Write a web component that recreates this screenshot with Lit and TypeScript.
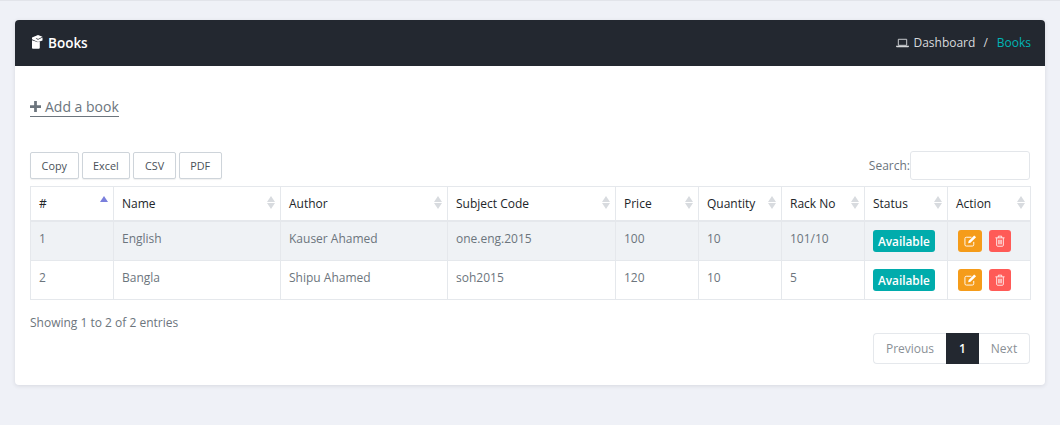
import { LitElement, css, html } from "lit";
import { customElement } from "lit/decorators.js";

const columns = ["#", "Name", "Author", "Subject Code", "Price", "Quantity", "Rack No", "Status", "Action"];

const books = [
  { id: 1, name: "English", author: "Kauser Ahamed", code: "one.eng.2015", price: 100, quantity: 10, rack: "101/10" },
  { id: 2, name: "Bangla", author: "Shipu Ahamed", code: "soh2015", price: 120, quantity: 10, rack: "5" },
];

const bookIcon = html`<svg class="book-icon" viewBox="0 0 13 15" width="13" height="15">
  <path fill="#fff" d="M2 6.200 8 8.200l1.800-.8V13.500c0 .8-.5 1.300-1.200 1.300H3.200C2.400 14.800 2 14.300 2 13.500z"/>
  <path fill="#fff" d="M2 3.600 8 1l4.500 1.800-4.400 2.200-1.500-.8-1 .4 2.400 1.200L12.500 3.500v3L8 8 2 5.200z"/>
</svg>`;

const laptopIcon = html`<svg viewBox="0 0 14 10" width="13" height="10">
  <path fill="none" stroke="#d3d5d8" stroke-width="1" d="M2.500 1h9v6.500h-9z"/>
  <path fill="#d3d5d8" d="M0 8h14v.8l-.8.7H.8L0 8.800z"/>
</svg>`;

const plusIcon = html`<svg viewBox="0 0 12 12" width="11" height="11">
  <path fill="#6c757d" d="M4.500 0h3v4.500H12v3H7.500V12h-3V7.500H0v-3h4.500z"/>
</svg>`;

const editIcon = html`<svg viewBox="0 0 14 14" width="13" height="13">
  <path fill="none" stroke="#fff" stroke-width="1" d="M10.500 8.500v3a1.500 1.500 0 0 1-1.500 1.500H2.500A1.500 1.500 0 0 1 1 11.500V5a1.500 1.500 0 0 1 1.500-1.500H8"/>
  <path fill="#fff" d="M5 7.500 11 1.500l2 2-6 6-2.500.5z"/>
</svg>`;

const trashIcon = html`<svg viewBox="0 0 12 14" width="10" height="12">
  <path fill="none" stroke="#fff" stroke-width="1" d="M2 3.500V12c0 .8.500 1.300 1 1.300h6c.5 0 1-.5 1-1.300V3.500M.5 3.200h11M4 3V1.200h4V3M4.500 5.500v5.500M6 5.500v5.500M7.500 5.500v5.500"/>
</svg>`;

@customElement("app-root")
export class AppRoot extends LitElement {
  static styles = css`
    :host {
      display: block;
      height: 425px;
      overflow: hidden;
      background: #eff1f7;
      font-family: "Open Sans", "Noto Sans", sans-serif;
      font-size: 12px;
      color: #6c757d;
      box-sizing: border-box;
      padding: 20px 15px 0;
      position: relative;
    }
    :host::before {
      content: "";
      position: absolute;
      left: 0;
      right: 0;
      top: 0;
      height: 1px;
      background: #e2e4ea;
    }
    .card {
      background: #fff;
      border-radius: 4px;
      height: 365px;
      box-shadow: 0 1px 4px rgba(40, 45, 60, 0.12);
      overflow: hidden;
    }
    .card-head {
      height: 46px;
      background: #232830;
      display: flex;
      align-items: center;
      justify-content: space-between;
      padding: 0 14px 0 15px;
    }
    .title {
      display: flex;
      align-items: center;
      gap: 5px;
      color: #fff;
      font-size: 13.500px;
      font-weight: 600;
      margin-top: -1px;
    }
    .book-icon {
      margin-top: -2px;
    }
    .crumbs {
      display: flex;
      align-items: center;
      color: #d8dadd;
      font-size: 12px;
      margin-top: -1px;
    }
    .crumbs svg {
      margin-right: 4px;
    }
    .crumbs .sep {
      margin: 0 9px 0 8px;
    }
    .crumbs .active {
      color: #00b5b5;
    }
    .card-body {
      padding: 0 15px;
    }
    .add-row {
      padding-top: 31px;
      height: 85px;
      box-sizing: border-box;
    }
    .add {
      display: inline-flex;
      align-items: center;
      gap: 4px;
      font-size: 14px;
      line-height: 19px;
      color: #6c757d;
      border-bottom: 1px solid #6c757d;
    }
    .tools {
      display: flex;
      justify-content: space-between;
      align-items: center;
      height: 28px;
      margin-bottom: 7px;
    }
    .buttons {
      display: flex;
      gap: 3px;
    }
    .buttons button {
      font: inherit;
      font-size: 10.800px;
      color: #495057;
      background: #fff;
      border: 1px solid #ced4da;
      border-radius: 2px;
      height: 27px;
      padding: 0 10.600px;
      box-shadow: 0 1px 1px rgba(0, 0, 0, 0.06);
    }
    .search {
      display: flex;
      align-items: center;
      font-size: 12px;
    }
    .search input {
      box-sizing: border-box;
      width: 120px;
      height: 29px;
      border: 1px solid #e3e6ea;
      border-radius: 3px;
      background: #fff;
      padding: 0;
    }
    table {
      width: 1000px;
      table-layout: fixed;
      border-collapse: collapse;
      font-size: 12px;
    }
    th,
    td {
      border: 1px solid #e5e8ec;
      padding: 0 8px;
      text-align: left;
      font-weight: 400;
      box-sizing: border-box;
    }
    th {
      height: 34px;
      color: #212529;
      border-bottom-width: 2px;
      position: relative;
    }
    td {
      height: 39.500px;
      padding-bottom: 4px;
    }
    td.flush {
      padding-bottom: 0;
    }
    tbody tr:nth-child(odd) td {
      background: #eff2f5;
    }
    .sort {
      position: absolute;
      right: 5px;
      top: 9px;
      display: flex;
      flex-direction: column;
      gap: 1px;
    }
    .sort i {
      display: block;
      width: 0;
      height: 0;
      border-left: 4.500px solid transparent;
      border-right: 4.500px solid transparent;
    }
    .sort .up {
      border-bottom: 6.500px solid #d8dbdf;
    }
    .sort .down {
      border-top: 6.500px solid #d8dbdf;
    }
    .sort.asc .up {
      border-bottom-color: #7a7fdc;
    }
    .sort.asc .down {
      border-top-color: transparent;
    }
    .badge {
      display: inline-block;
      vertical-align: middle;
      background: #00acac;
      color: #fff;
      font-size: 11.800px;
      font-weight: 600;
      line-height: 22px;
      padding: 0 5px;
      border-radius: 3px;
    }
    .actions {
      display: flex;
      gap: 7px;
      padding-left: 2px;
    }
    .act {
      width: 24px;
      height: 22px;
      border-radius: 3px;
      display: flex;
      align-items: center;
      justify-content: center;
      background: #f59c1a;
    }
    .act.del {
      width: 22px;
      background: #ff5b57;
    }
    .info {
      margin-top: 14px;
      line-height: 18px;
    }
    .pager-row {
      display: flex;
      justify-content: flex-end;
      margin-top: 1px;
    }
    .pager {
      display: flex;
      height: 31px;
      line-height: 29px;
      box-sizing: border-box;
      font-size: 12px;
      color: #8a9096;
    }
    .pager span {
      box-sizing: border-box;
      border: 1px solid #e5e8ec;
      text-align: center;
    }
    .pager .prev {
      width: 73px;
      border-radius: 4px 0 0 4px;
      border-right: 0;
    }
    .pager .cur {
      width: 33px;
      background: #232830;
      border-color: #232830;
      color: #fff;
      font-weight: 600;
    }
    .pager .next {
      width: 51px;
      border-radius: 0 4px 4px 0;
      border-left: 0;
    }
    .w83 {
      width: 83px;
    }
    .w167 {
      width: 167px;
    }
    .w168 {
      width: 168px;
    }
  `;

  render() {
    const widths = ["w83", "w167", "w167", "w168", "w83", "w83", "w83", "w83", "w83"];
    return html`
      <div class="card">
        <div class="card-head">
          <div class="title">${bookIcon}<span>Books</span></div>
          <div class="crumbs">
            ${laptopIcon}<span>Dashboard</span><span class="sep">/</span><span class="active">Books</span>
          </div>
        </div>
        <div class="card-body">
          <div class="add-row">
            <a class="add">${plusIcon}<span>Add a book</span></a>
          </div>
          <div class="tools">
            <div class="buttons">
              ${["Copy", "Excel", "CSV", "PDF"].map((b) => html`<button>${b}</button>`)}
            </div>
            <label class="search">Search:<input type="text" /></label>
          </div>
          <table>
            <colgroup>
              ${widths.map((w) => html`<col class=${w} />`)}
            </colgroup>
            <thead>
              <tr>
                ${columns.map(
                  (c, i) => html`<th>
                    ${c}
                    <span class="sort ${i === 0 ? "asc" : ""}"><i class="up"></i><i class="down"></i></span>
                  </th>`,
                )}
              </tr>
            </thead>
            <tbody>
              ${books.map(
                (b) => html`<tr>
                  <td>${b.id}</td>
                  <td>${b.name}</td>
                  <td>${b.author}</td>
                  <td>${b.code}</td>
                  <td>${b.price}</td>
                  <td>${b.quantity}</td>
                  <td>${b.rack}</td>
                  <td class="flush"><span class="badge">Available</span></td>
                  <td class="flush">
                    <div class="actions">
                      <span class="act">${editIcon}</span>
                      <span class="act del">${trashIcon}</span>
                    </div>
                  </td>
                </tr>`,
              )}
            </tbody>
          </table>
          <div class="info">Showing 1 to 2 of 2 entries</div>
          <div class="pager-row">
            <div class="pager">
              <span class="prev">Previous</span><span class="cur">1</span><span class="next">Next</span>
            </div>
          </div>
        </div>
      </div>
    `;
  }
}
